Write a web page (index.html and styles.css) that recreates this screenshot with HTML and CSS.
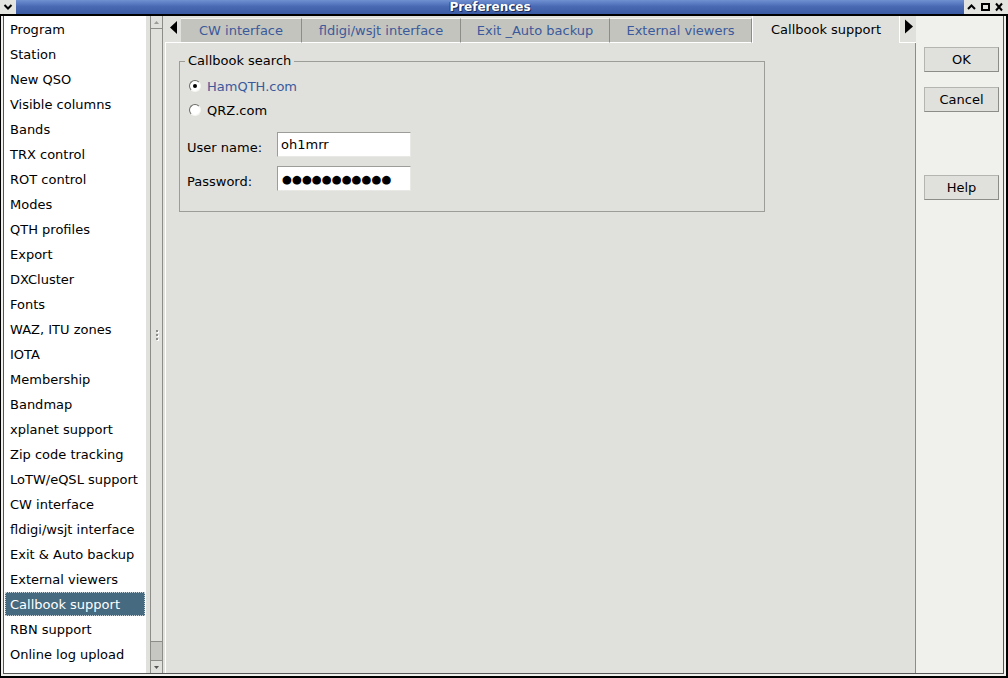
FILE: index.html
```html
<!DOCTYPE html>
<html>
<head>
<meta charset="utf-8">
<title>Preferences</title>
<link rel="stylesheet" href="styles.css">
</head>
<body>
<div class="window">
  <div class="titlebar">
    <div class="tb-menu">
      <svg width="16" height="14" viewBox="0 0 16 14"><path d="M4.5 5 L8 8.5 L11.5 5" stroke="#000" stroke-width="2" fill="none"/></svg>
    </div>
    <div class="tb-title">Preferences</div>
    <div class="tb-btns">
      <svg width="44" height="14" viewBox="0 0 44 14">
        <path d="M4 9 L7.5 5.5 L11 9" stroke="#000" stroke-width="2" fill="none"/>
        <rect x="18" y="4" width="7" height="6" fill="none" stroke="#000" stroke-width="2"/>
        <path d="M32 3.5 L38 10.5 M38 3.5 L32 10.5" stroke="#000" stroke-width="2"/>
      </svg>
    </div>
  </div>
  <div class="frame">
    <div class="inner">
      <ul class="list">
        <li>Program</li>
        <li>Station</li>
        <li>New QSO</li>
        <li>Visible columns</li>
        <li>Bands</li>
        <li>TRX control</li>
        <li>ROT control</li>
        <li>Modes</li>
        <li>QTH profiles</li>
        <li>Export</li>
        <li>DXCluster</li>
        <li>Fonts</li>
        <li>WAZ, ITU zones</li>
        <li>IOTA</li>
        <li>Membership</li>
        <li>Bandmap</li>
        <li>xplanet support</li>
        <li>Zip code tracking</li>
        <li>LoTW/eQSL support</li>
        <li>CW interface</li>
        <li>fldigi/wsjt interface</li>
        <li>Exit &amp; Auto backup</li>
        <li>External viewers</li>
        <li class="selected">Callbook support</li>
        <li>RBN support</li>
        <li>Online log upload</li>
      </ul>
      <div class="gap4"></div>
      <div class="scrollbar">
        <div class="sb-btn up"><svg width="11" height="11" viewBox="0 0 11 11"><path d="M3 7 L5.5 4 L8 7 Z" fill="#9a9a96"/></svg></div>
        <div class="sb-thumb"><span class="grip"></span><span class="grip"></span><span class="grip"></span></div>
        <div class="sb-trough"></div>
        <div class="sb-btn down"><svg width="11" height="11" viewBox="0 0 11 11"><path d="M3 4 L5.5 7 L8 4 Z" fill="#555"/></svg></div>
      </div>
      <div class="gap2"></div>
      <div class="notebook">
        <div class="tabbar">
          <div class="tab-arrow left"><svg width="10" height="16" viewBox="0 0 10 16"><path d="M9 1 L2 7.5 L9 14 Z" fill="#000"/></svg></div>
          <div class="tab w1">CW interface</div>
          <div class="tab w2">fldigi/wsjt interface</div>
          <div class="tab w3">Exit _Auto backup</div>
          <div class="tab w4">External viewers</div>
          <div class="tab active w5">Callbook support</div>
          <div class="tab-arrow right"><svg width="10" height="16" viewBox="0 0 10 16"><path d="M1 0.5 L9 7.5 L1 14.5 Z" fill="#000"/></svg></div>
        </div>
        <div class="panel">
          <div class="group">
            <div class="group-title">Callbook search</div>
            <div class="radio-row">
              <span class="radio checked"></span>
              <span class="radio-label active">HamQTH.com</span>
            </div>
            <div class="radio-row">
              <span class="radio"></span>
              <span class="radio-label">QRZ.com</span>
            </div>
            <div class="form">
              <div class="f-label">User name:</div>
              <div class="f-input">oh1mrr</div>
              <div class="f-label">Password:</div>
              <div class="f-input pw">●●●●●●●●●●●</div>
            </div>
          </div>
        </div>
      </div>
      <div class="side">
        <div class="btn">OK</div>
        <div class="btn">Cancel</div>
        <div class="btn help">Help</div>
      </div>
    </div>
  </div>
</div>
</body>
</html>
```

FILE: styles.css
```css
* { box-sizing: border-box; }
html, body {
  margin: 0;
  padding: 0;
  background: #e0e0dc;
}
body {
  font-family: "DejaVu Sans", "Liberation Sans", sans-serif;
  font-size: 13px;
  color: #000;
}
.window {
  width: 1008px;
  height: 678px;
  display: flex;
  flex-direction: column;
  overflow: hidden;
}
.titlebar {
  height: 16px;
  border-bottom: 2px solid #000;
  background: linear-gradient(#7090d2, #4a6bb4 45%, #3a5aa3);
  display: flex;
  align-items: stretch;
}
.tb-menu {
  width: 16px;
  background: #e4e4e0;
  display: flex;
}
.tb-title {
  flex: 1;
  text-align: center;
  color: #fff;
  font-weight: bold;
  font-size: 12px;
  line-height: 14px;
  text-shadow: 1px 1px 0 #1d2c5a, -1px 0 0 #2a3d75;
}
.tb-btns {
  width: 44px;
  background: #e4e4e0;
  display: flex;
}
.frame {
  flex: 1;
  border-left: 1px solid #000;
  border-right: 2px solid #000;
  border-bottom: 2px solid #000;
  padding: 0 2px 2px 2px;
  background: #f0f0ec;
  display: flex;
}
.inner {
  flex: 1;
  border: 1px solid #555;
  border-top: none;
  background: #e0e0dc;
  display: flex;
}
.list {
  list-style: none;
  margin: 0;
  padding: 1px 1px 0 1px;
  width: 142px;
  background: #fff;
  overflow: hidden;
}
.list li {
  height: 24px;
  line-height: 26px;
  margin-bottom: 1px;
  padding-left: 5px;
  white-space: nowrap;
}
.list li.selected {
  background: #466a7f;
  color: #fff;
  outline: 1px dotted #c8d4dc;
  outline-offset: -1px;
}
.gap4 { width: 4px; }
.gap2 { width: 2px; }
.scrollbar {
  width: 13px;
  border-left: 1px solid #8c8c88;
  border-right: 1px solid #8c8c88;
  display: flex;
  flex-direction: column;
  background: #c6c6c2;
}
.sb-btn {
  height: 12px;
  background: #e0e0dc;
  display: flex;
  align-items: center;
  justify-content: center;
}
.sb-btn.up { border-bottom: 1px solid #8c8c88; height: 13px; }
.sb-btn.down { border-top: 1px solid #8c8c88; height: 13px; }
.sb-thumb {
  height: 613px;
  background: #e0e0dc;
  border-bottom: 1px solid #8c8c88;
  display: flex;
  flex-direction: column;
  align-items: center;
  justify-content: center;
  gap: 2px;
}
.grip {
  width: 2px;
  height: 2px;
  background: #8c8c88;
  box-shadow: 1px 1px 0 #fff;
}
.sb-trough { flex: 1; }
.notebook {
  width: 751px;
  display: flex;
  flex-direction: column;
}
.tabbar {
  height: 27px;
  display: flex;
  align-items: flex-end;
}
.tab-arrow {
  height: 27px;
  display: flex;
  border-bottom: 1px solid #fff;
}
.tab-arrow.left {
  width: 16px;
  padding: 4px 0 0 3px;
}
.tab-arrow.right {
  width: 17px;
  border-left: 1px solid #fff;
  padding: 3px 0 0 4px;
}
.tab {
  height: 25px;
  background: #c4c4be;
  color: #3a5a9c;
  border-top: 1px solid #f4f4f0;
  border-right: 1px solid #8c8c88;
  border-bottom: 1px solid #fff;
  text-align: center;
  line-height: 23px;
  white-space: nowrap;
}
.tab.active {
  height: 27px;
  background: #e0e0dc;
  color: #000;
  border-top: none;
  border-right: none;
  border-bottom: none;
  border-left: 1px solid #fff;
  line-height: 28px;
}
.w1 { width: 121px; }
.w2 { width: 159px; }
.w3 { width: 149px; }
.w4 { width: 142px; }
.w5 { width: 147px; }
.panel {
  flex: 1;
  border-left: 1px solid #fff;
  border-right: 1px solid #8c8c88;
  background: #e0e0dc;
  padding-top: 1px;
}
.group {
  width: 586px;
  margin: 17px 0 0 13px;
  border: 1px solid #9c9c98;
  padding: 0 0 20px 7px;
}
.group-title {
  display: table;
  margin: -9px 0 0 -2px;
  padding: 0 3px;
  background: #e0e0dc;
  line-height: 16px;
}
.radio-row {
  height: 24px;
  display: flex;
  align-items: center;
}
.group-title + .radio-row { margin-top: 5px; }
.radio {
  width: 12px;
  height: 12px;
  margin-left: 2px;
  border-radius: 50%;
  border: 1px solid;
  border-color: #6a6a66 #f4f4f0 #f4f4f0 #6a6a66;
  background: #fff;
  display: flex;
  align-items: center;
  justify-content: center;
}
.radio.checked::after {
  content: "";
  width: 4px;
  height: 4px;
  border-radius: 50%;
  background: #000;
}
.radio-label {
  margin-left: 6px;
  line-height: 15px;
}
.radio-label.active { color: #3a5a9c; }
.form {
  margin-top: 10px;
  display: grid;
  grid-template-columns: 90px 134px;
  grid-auto-rows: 25px;
  row-gap: 9px;
}
.f-label {
  padding-top: 8px;
  line-height: 15px;
}
.f-input {
  background: #fff;
  border: 1px solid;
  border-color: #9c9c98 #e8e8e4 #e8e8e4 #9c9c98;
  padding: 4px 3px 0 3px;
  line-height: 15px;
  white-space: nowrap;
  overflow: hidden;
}
.f-input.pw {
  font-size: 11.4px;
  padding-left: 4px;
  padding-top: 4px;
  line-height: 16px;
}
.side {
  flex: 1;
  background: #f0f0ec;
  padding: 31px 0 0 8px;
  display: flex;
  flex-direction: column;
  align-items: flex-start;
}
.btn {
  width: 75px;
  height: 25px;
  background: #e0e0dc;
  border: 1px solid;
  border-color: #b4b4b0 #8c8c88 #8c8c88 #b4b4b0;
  text-align: center;
  line-height: 23px;
  margin-bottom: 15px;
}
.btn + .btn.help { margin-top: 48px; }
```
